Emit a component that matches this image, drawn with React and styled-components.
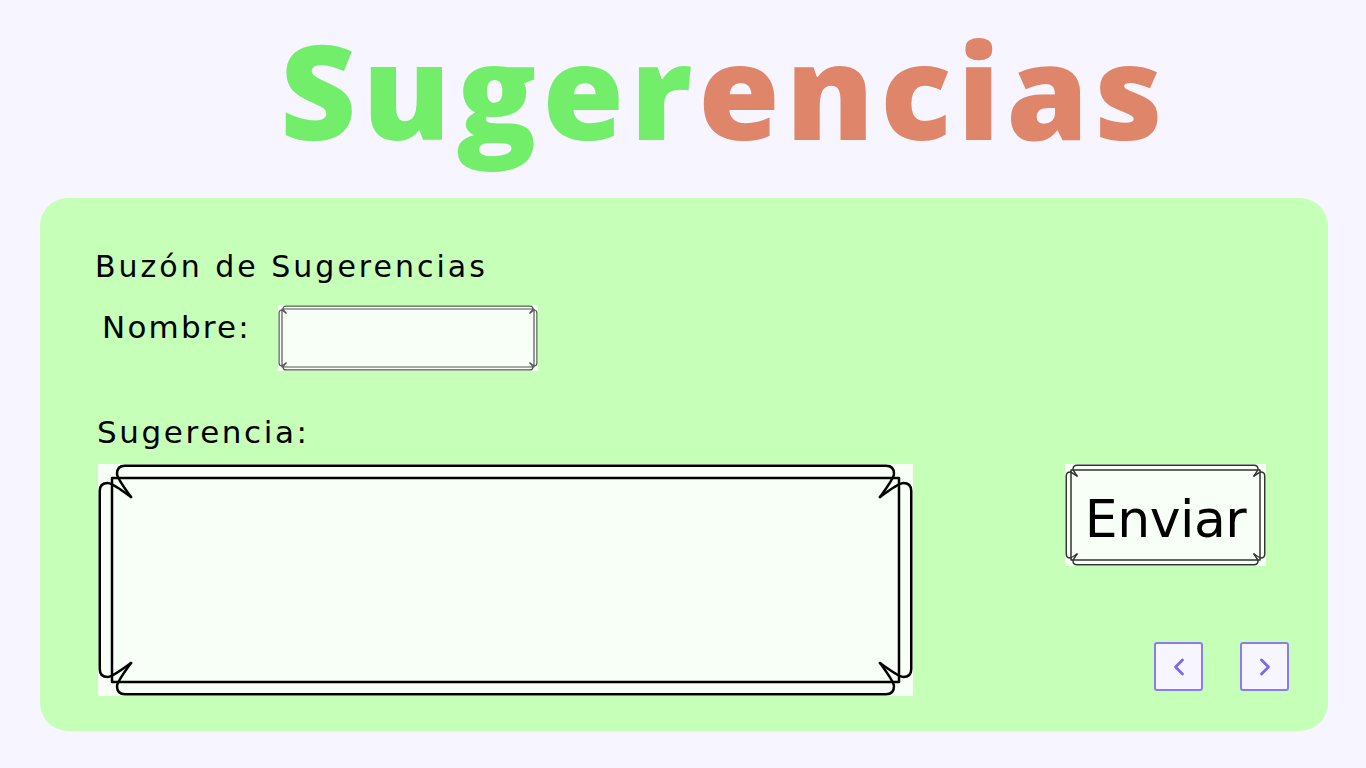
import { ChevronLeft, ChevronRight } from "lucide-react";
import styled, { createGlobalStyle } from "styled-components";

const GlobalStyle = createGlobalStyle`
  body {
    margin: 0;
    background: #f7f5ff;
    font-family: "DejaVu Sans", "Noto Sans", sans-serif;
    color: #000;
  }
`;

function Frame({ w, h, d, c, t, r, sw, color }) {
  const o = sw / 2 + 0.5;
  const tx = d + t;
  const ty = d + t;
  const top = `M ${tx} ${ty} Q ${c} ${d} ${c} ${o + r} Q ${c} ${o} ${c + r} ${o} L ${w - c - r} ${o} Q ${w - c} ${o} ${w - c} ${o + r} Q ${w - c} ${d} ${w - tx} ${ty}`;
  const bottom = `M ${tx} ${h - ty} Q ${c} ${h - d} ${c} ${h - o - r} Q ${c} ${h - o} ${c + r} ${h - o} L ${w - c - r} ${h - o} Q ${w - c} ${h - o} ${w - c} ${h - o - r} Q ${w - c} ${h - d} ${w - tx} ${h - ty}`;
  const left = `M ${tx} ${ty} Q ${d} ${c} ${o + r} ${c} Q ${o} ${c} ${o} ${c + r} L ${o} ${h - c - r} Q ${o} ${h - c} ${o + r} ${h - c} Q ${d} ${h - c} ${tx} ${h - ty}`;
  const right = `M ${w - tx} ${ty} Q ${w - d} ${c} ${w - o - r} ${c} Q ${w - o} ${c} ${w - o} ${c + r} L ${w - o} ${h - c - r} Q ${w - o} ${h - c} ${w - o - r} ${h - c} Q ${w - d} ${h - c} ${w - tx} ${h - ty}`;
  return (
    <FrameSvg width={w} height={h} viewBox={`0 0 ${w} ${h}`}>
      <g fill="none" stroke={color} strokeWidth={sw} strokeLinecap="round" strokeLinejoin="round">
        <rect x={d} y={d} width={w - 2 * d} height={h - 2 * d} />
        <path d={top} />
        <path d={bottom} />
        <path d={left} />
        <path d={right} />
      </g>
    </FrameSvg>
  );
}

export default function App() {
  return (
    <Page>
      <GlobalStyle />
      <Title>
        <Green>Suger</Green>
        <Orange>encias</Orange>
      </Title>
      <Card>
        <Heading>Buzón de Sugerencias</Heading>
        <NameRow>
          <Label $width="152px" $top="2px">Nombre:</Label>
          <InputBox>
            <Frame w={260} h={66} d={4} c={5} t={4} r={3} sw={1.2} color="#555" />
            <Field type="text" />
          </InputBox>
        </NameRow>
        <Label $top="41px" $left="-1px" $spacing="2.6px">Sugerencia:</Label>
        <BottomRow>
          <AreaBox>
            <Frame w={815} h={232} d={14} c={19} t={19} r={8} sw={2.5} color="#000" />
            <Area />
          </AreaBox>
          <Side>
            <SendButton>
              <Frame w={201} h={102} d={6} c={8} t={6} r={4} sw={1.5} color="#333" />
              <SendText>Enviar</SendText>
            </SendButton>
            <Nav>
              <NavButton aria-label="Anterior">
                <ChevronLeft size={28} strokeWidth={2.4} />
              </NavButton>
              <NavButton aria-label="Siguiente">
                <ChevronRight size={28} strokeWidth={2.4} />
              </NavButton>
            </Nav>
          </Side>
        </BottomRow>
      </Card>
    </Page>
  );
}

const Page = styled.div`
  width: 1366px;
  height: 768px;
  box-sizing: border-box;
`;

const Title = styled.h1`
  margin: 0 0 0 280px;
  height: 198px;
  font-family: "Open Sans", "Noto Sans", sans-serif;
  font-size: 132px;
  line-height: 178px;
  font-weight: 800;
  letter-spacing: 6px;
  white-space: nowrap;
`;

const Green = styled.span`
  color: #72ee6b;
`;

const Orange = styled.span`
  color: #df8569;
`;

const Card = styled.div`
  margin-left: 40px;
  width: 1288px;
  height: 533px;
  box-sizing: border-box;
  padding: 49px 39px 35px 58px;
  background: #c6ffb8;
  border-radius: 28px;
  display: flex;
  flex-direction: column;
`;

const Heading = styled.h2`
  margin: 0 0 0 -3px;
  font-size: 30px;
  line-height: 40px;
  font-weight: 400;
  letter-spacing: 3px;
`;

const NameRow = styled.div`
  display: flex;
  align-items: flex-start;
  gap: 24px;
  margin-top: 18px;
  margin-left: 4px;
`;

const Label = styled.div`
  width: ${(p) => p.$width || "auto"};
  font-size: 31px;
  line-height: 40px;
  letter-spacing: ${(p) => p.$spacing || "2.2px"};
  margin-top: ${(p) => p.$top || "0"};
  margin-left: ${(p) => p.$left || "0"};
`;

const InputBox = styled.div`
  position: relative;
  width: 260px;
  height: 66px;
  background: #f8fff6;
`;

const FrameSvg = styled.svg`
  position: absolute;
  inset: 0;
  pointer-events: none;
`;

const Field = styled.input`
  position: relative;
  width: 100%;
  height: 100%;
  box-sizing: border-box;
  border: none;
  background: transparent;
  padding: 0 12px;
  outline: none;
  font: inherit;
`;

const BottomRow = styled.div`
  display: flex;
  flex: 1;
  margin-top: 12px;
`;

const AreaBox = styled.div`
  position: relative;
  width: 815px;
  height: 232px;
  background: #f8fff6;
`;

const Area = styled.textarea`
  position: relative;
  width: 100%;
  height: 100%;
  box-sizing: border-box;
  border: none;
  background: transparent;
  resize: none;
  padding: 22px;
  outline: none;
  font: inherit;
`;

const Side = styled.div`
  flex: 1;
  display: flex;
  flex-direction: column;
  justify-content: space-between;
  align-items: flex-start;
  padding-left: 152px;
  padding-bottom: 5px;
`;

const SendButton = styled.button`
  position: relative;
  width: 201px;
  height: 102px;
  display: flex;
  align-items: center;
  justify-content: center;
  padding: 8px 0 0;
  border: none;
  background: #f8fff6;
  cursor: pointer;
`;

const SendText = styled.span`
  position: relative;
  font-family: "DejaVu Sans", "Noto Sans", sans-serif;
  font-size: 52px;
  line-height: 60px;
  letter-spacing: -0.5px;
  color: #000;
`;

const Nav = styled.div`
  align-self: flex-end;
  display: flex;
  gap: 37px;
`;

const NavButton = styled.button`
  width: 49px;
  height: 49px;
  display: flex;
  align-items: center;
  justify-content: center;
  padding: 0;
  background: #f7f5ff;
  border: 2px solid #8c7cf0;
  border-radius: 3px;
  color: #7b68ee;
  cursor: pointer;
`;
